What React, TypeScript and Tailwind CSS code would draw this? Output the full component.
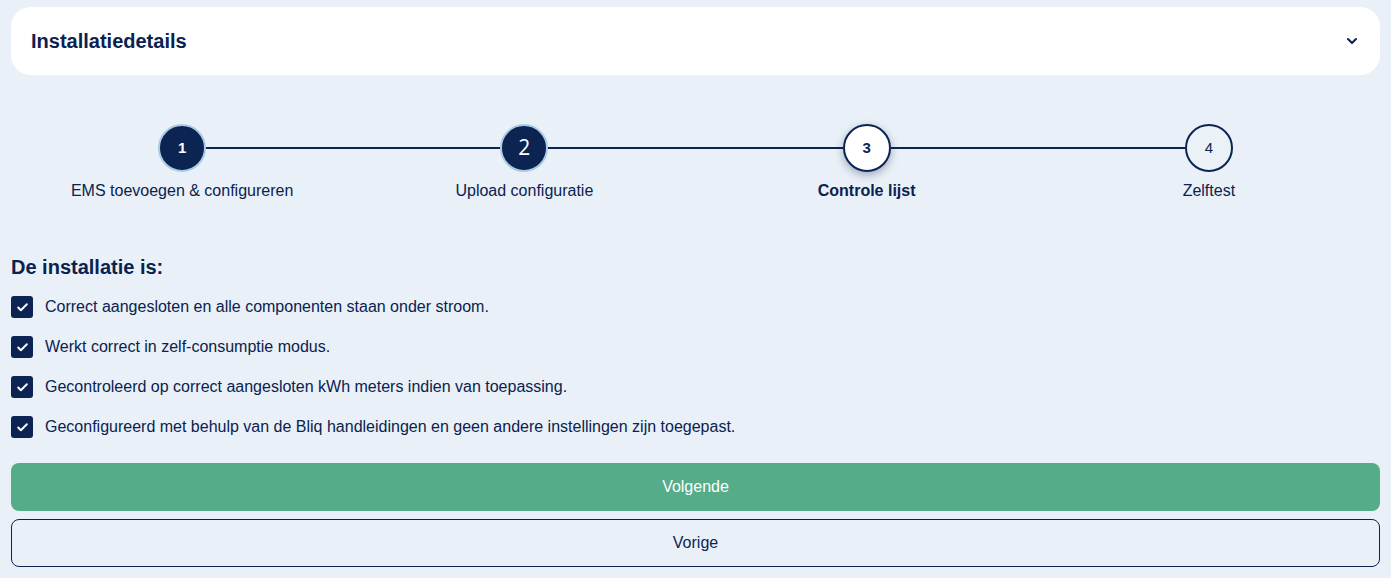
import { ChevronDown, Check } from "lucide-react";

const STEPS = [
  { n: "1", label: "EMS toevoegen & configureren", state: "done" },
  { n: "2", label: "Upload configuratie", state: "done2" },
  { n: "3", label: "Controle lijst", state: "active" },
  { n: "4", label: "Zelftest", state: "todo" },
];

const CHECKS = [
  "Correct aangesloten en alle componenten staan onder stroom.",
  "Werkt correct in zelf-consumptie modus.",
  "Gecontroleerd op correct aangesloten kWh meters indien van toepassing.",
  "Geconfigureerd met behulp van de Bliq handleidingen en geen andere instellingen zijn toegepast.",
];

const StepCircle = ({ n, state }: { n: string; state: string }) => {
  if (state === "done")
    return (
      <div className="w-12 h-12 rounded-full bg-[#0b2452] border-2 border-[#a9cbe3] flex items-center justify-center text-white text-[15px] font-bold">
        {n}
      </div>
    );
  if (state === "done2")
    return (
      <div
        className="w-12 h-12 rounded-full bg-[#0b2452] border-2 border-[#a9cbe3] flex items-center justify-center text-white text-[21px]"
        style={{ fontFamily: '"Open Sans", sans-serif' }}
      >
        {n}
      </div>
    );
  if (state === "active")
    return (
      <div className="w-12 h-12 rounded-full bg-white border-2 border-[#0b2452] flex items-center justify-center text-[#0b2452] text-[15px] font-bold shadow-[0_3px_8px_rgba(11,36,82,0.35)]">
        {n}
      </div>
    );
  return (
    <div className="w-12 h-12 rounded-full bg-[#eaf1f7] border-2 border-[#0b2452] flex items-center justify-center text-[#0b2452] text-[15px]">
      {n}
    </div>
  );
};

export default function App() {
  return (
    <div
      className="min-h-screen bg-[#e9f0f7] px-[11px] pt-[7px] text-[#0a2250]"
      style={{ fontFamily: '"Liberation Sans", Arial, sans-serif' }}
    >
      <div className="bg-white rounded-[20px] h-[68px] flex items-center justify-between pl-5 pr-5">
        <span className="text-[20px] font-bold">Installatiedetails</span>
        <ChevronDown size={16} strokeWidth={3} />
      </div>

      <div className="grid grid-cols-4 mt-[49px]">
        {STEPS.map((s, i) => (
          <div key={s.n} className="flex flex-col items-center">
            <div className="flex items-center w-full">
              <div className={`flex-1 h-[2px] ${i === 0 ? "" : "bg-[#0b2452]"}`} />
              <StepCircle n={s.n} state={s.state} />
              <div className={`flex-1 h-[2px] ${i === 3 ? "" : "bg-[#0b2452]"}`} />
            </div>
            <span className={`mt-[9px] text-base leading-5 ${s.state === "active" ? "font-bold" : ""}`}>
              {s.label}
            </span>
          </div>
        ))}
      </div>

      <h2 className="mt-[54px] text-[20px] font-bold leading-6">De installatie is:</h2>

      <div className="mt-[17px] flex flex-col gap-[18px]">
        {CHECKS.map((c) => (
          <div key={c} className="flex items-center gap-3 h-[22px]">
            <span className="w-[22px] h-[22px] rounded-[3px] bg-[#0b2452] flex items-center justify-center text-white">
              <Check size={13} strokeWidth={3.5} />
            </span>
            <span className="text-base">{c}</span>
          </div>
        ))}
      </div>

      <button className="mt-[25px] w-full h-12 rounded-lg bg-[#55ac88] text-white text-base font-medium">
        Volgende
      </button>
      <button className="mt-2 w-full h-12 rounded-lg border border-[#0b2452] text-base text-[#0b2452]">
        Vorige
      </button>
    </div>
  );
}
